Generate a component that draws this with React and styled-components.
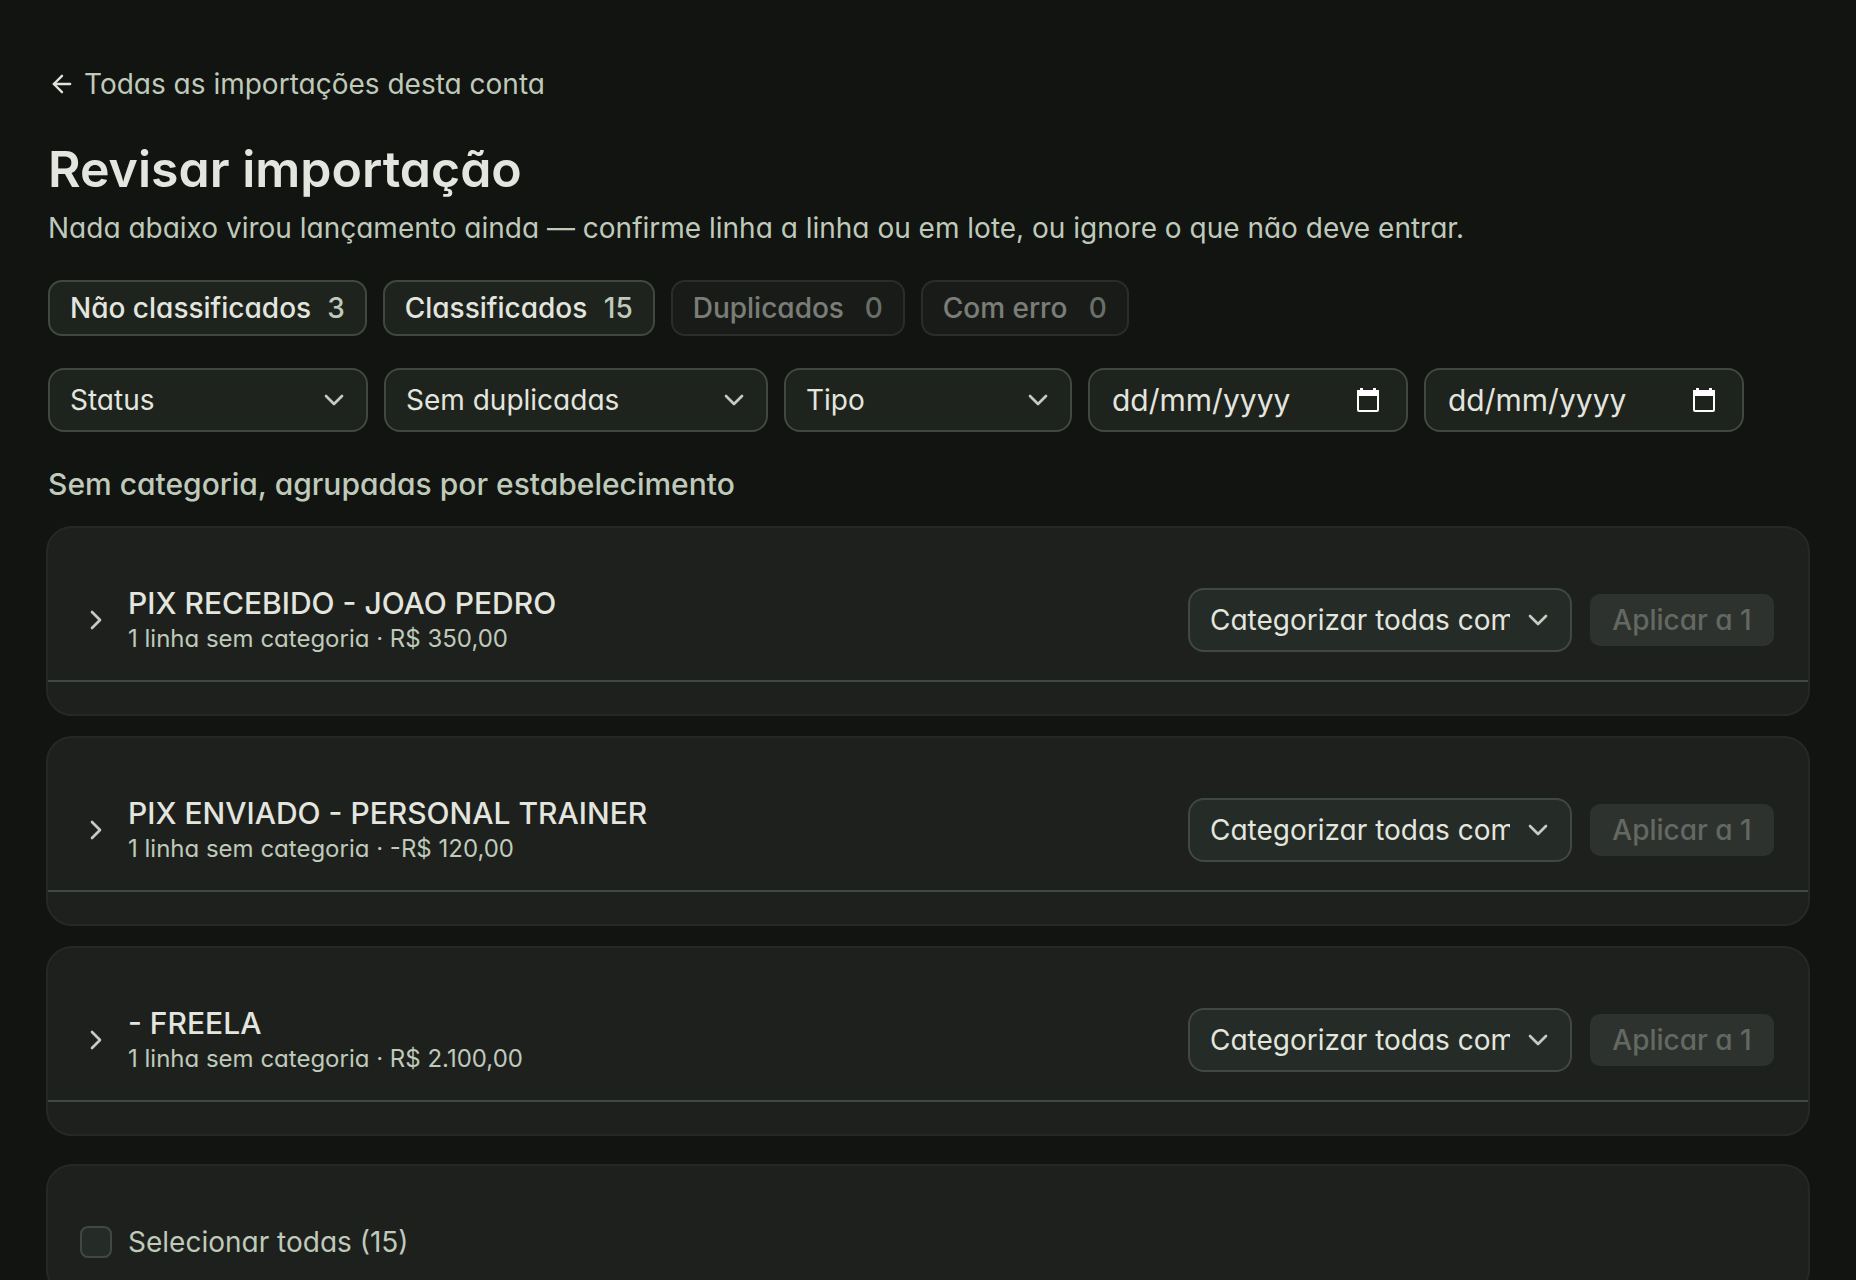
import styled, { createGlobalStyle } from "styled-components";
import { ArrowLeft, ChevronDown, ChevronRight } from "lucide-react";

const chips = [
    { label: "Não classificados", count: 3, width: 318 },
    { label: "Classificados", count: 15, width: 272 },
    { label: "Duplicados", count: 0, width: 234 },
    { label: "Com erro", count: 0, width: 208 },
];

const groups = [
    { name: "PIX RECEBIDO - JOAO PEDRO", info: "1 linha sem categoria · R$ 350,00" },
    { name: "PIX ENVIADO - PERSONAL TRAINER", info: "1 linha sem categoria · -R$ 120,00" },
    { name: "- FREELA", info: "1 linha sem categoria · R$ 2.100,00" },
];

const CalendarIcon = () => (
    <svg width="24" height="26" viewBox="0 0 24 26" fill="none" aria-hidden="true">
        <rect x="2" y="4" width="20" height="20" rx="1" stroke="#ffffff" strokeWidth="2" />
        <path d="M1 3h22v6H1zM4 1h3v3H4zM17 1h3v3h-3z" fill="#ffffff" />
    </svg>
);

const SelectField = ({ label, width, raised }) => (
    <Field $width={width}>
        <Select aria-label={label} $raised={raised} defaultValue="">
            <option value="">{label}</option>
        </Select>
        <FieldIcon>
            <ChevronDown size={32} />
        </FieldIcon>
    </Field>
);

const DateField = ({ label }) => (
    <Field $width={320}>
        <DateInput type="text" inputMode="numeric" placeholder="dd/mm/yyyy" aria-label={label} />
        <DateIcon>
            <CalendarIcon />
        </DateIcon>
    </Field>
);

const GroupCard = ({ name, info }) => (
    <Card>
        <GroupHeader>
            <Toggle type="button" aria-label={`Expandir ${name}`}>
                <ChevronRight size={32} />
            </Toggle>
            <GroupText>
                <GroupName>{name}</GroupName>
                <GroupInfo>{info}</GroupInfo>
            </GroupText>
            <GroupActions>
                <SelectField label="Categorizar todas como…" width={384} raised />
                <ApplyButton type="button" disabled>Aplicar a 1</ApplyButton>
            </GroupActions>
        </GroupHeader>
    </Card>
);

const App = () => {
    return (
        <>
            <GlobalStyle />
            <Page>
                <BackLink href="#importacoes">
                    <ArrowLeft size={28} color="#dfe4dc" />
                    Todas as importações desta conta
                </BackLink>
                <Title>Revisar importação</Title>
                <Subtitle>
                    Nada abaixo virou lançamento ainda — confirme linha a linha ou em lote, ou ignore o que não deve entrar.
                </Subtitle>
                <Chips>
                    {chips.map((chip) => (
                        <Chip key={chip.label} type="button" $width={chip.width} disabled={chip.count === 0}>
                            {chip.label}
                            <Count>{chip.count}</Count>
                        </Chip>
                    ))}
                </Chips>
                <Filters>
                    <SelectField label="Status" width={320} />
                    <SelectField label="Sem duplicadas" width={384} />
                    <SelectField label="Tipo" width={288} />
                    <DateField label="Data inicial" />
                    <DateField label="Data final" />
                </Filters>
                <SectionTitle>Sem categoria, agrupadas por estabelecimento</SectionTitle>
                <Groups>
                    {groups.map((group) => (
                        <GroupCard key={group.name} name={group.name} info={group.info} />
                    ))}
                </Groups>
                <Card>
                    <SelectAll>
                        <Checkbox type="checkbox" />
                        Selecionar todas (15)
                    </SelectAll>
                </Card>
            </Page>
        </>
    );
};
export default App;

const GlobalStyle = createGlobalStyle`
  * {
    box-sizing: border-box;
  }
  html {
    background-color: #121411;
    color-scheme: dark;
    scrollbar-width: none;
  }
  body {
    margin: 0;
    color: #e3e5df;
    font-family: Inter, sans-serif;
    font-size: 28px;
    line-height: 40px;
    font-feature-settings: "cv11";
  }
  button, input, select {
    font: inherit;
    font-feature-settings: inherit;
    color: inherit;
    margin: 0;
  }
`;
const Page = styled.main`
  display: flex;
  flex-direction: column;
  padding: 64px 46px 32px;
`;
const BackLink = styled.a`
  display: flex;
  align-items: center;
  align-self: flex-start;
  gap: 8px;
  padding: 0 2px;
  color: #bfcaba;
  text-decoration: none;
`;
const Title = styled.h1`
  margin: 36px 2px 10px;
  font-size: 50px;
  font-weight: 600;
  line-height: 58px;
`;
const Subtitle = styled.p`
  margin: 0 2px;
  color: #bfcaba;
`;
const Chips = styled.div`
  display: flex;
  flex-wrap: wrap;
  gap: 16px;
  margin: 32px 2px;
`;
const Chip = styled.button`
  min-width: ${(props) => props.$width}px;
  height: 56px;
  display: flex;
  align-items: center;
  justify-content: space-between;
  gap: 16px;
  padding: 0 20px;
  border: 2px solid #404842;
  border-radius: 14px;
  background-color: #1e231e;
  font-weight: 500;
  line-height: 36px;
  &:disabled {
    opacity: 0.5;
  }
`;
const Count = styled.span`
  color: #bfcaba;
`;
const Filters = styled.div`
  display: flex;
  flex-wrap: wrap;
  gap: 16px;
  margin: 0 2px;
`;
const Field = styled.div`
  display: grid;
  align-items: center;
  flex: none;
  width: ${(props) => props.$width}px;
  height: 64px;
`;
const Select = styled.select`
  grid-area: 1 / 1;
  width: 100%;
  height: 64px;
  appearance: none;
  padding: 0 60px 0 20px;
  border: 2px solid #404842;
  border-radius: 16px;
  background-color: ${(props) => (props.$raised ? "#252b26" : "#1e231e")};
  text-overflow: clip;
`;
const FieldIcon = styled.span`
  grid-area: 1 / 1;
  justify-self: end;
  display: flex;
  margin-right: 18px;
  color: #c4cbc1;
  pointer-events: none;
`;
const DateInput = styled.input`
  grid-area: 1 / 1;
  width: 100%;
  height: 64px;
  padding: 0 64px 0 22px;
  border: 2px solid #404842;
  border-radius: 16px;
  background-color: #1e231e;
  font-size: 30px;
  &::placeholder {
    color: #e3e5df;
    opacity: 1;
  }
`;
const DateIcon = styled(FieldIcon)`
  margin-right: 28px;
`;
const SectionTitle = styled.h2`
  margin: 32px 2px 22px;
  color: #bfcaba;
  font-size: 30px;
  font-weight: 500;
  line-height: 40px;
`;
const Groups = styled.div`
  display: flex;
  flex-direction: column;
  gap: 20px;
  margin-bottom: 28px;
`;
const Card = styled.section`
  padding-bottom: 32px;
  border: 2px solid #252824;
  border-radius: 26px;
  background-color: #1e201d;
`;
const GroupHeader = styled.div`
  display: flex;
  align-items: center;
  gap: 16px;
  padding: 56px 34px 24px 32px;
  border-bottom: 2px solid #404842;
`;
const Toggle = styled.button`
  display: flex;
  flex: none;
  padding: 0;
  border: 0;
  background: none;
  color: #c4cbc1;
`;
const GroupText = styled.div`
  flex: 1;
  min-width: 0;
`;
const GroupName = styled.div`
  font-size: 30px;
  font-weight: 500;
  line-height: 38px;
`;
const GroupInfo = styled.div`
  color: #bfcaba;
  font-size: 24px;
  line-height: 34px;
`;
const GroupActions = styled.div`
  display: flex;
  align-items: center;
  gap: 18px;
`;
const ApplyButton = styled.button`
  flex: none;
  width: 184px;
  height: 52px;
  padding: 0;
  border: 0;
  border-radius: 10px;
  background-color: #2e322e;
  font-weight: 500;
  line-height: 36px;
  &:disabled {
    color: #646863;
  }
`;
const SelectAll = styled.label`
  display: flex;
  align-items: center;
  gap: 16px;
  padding: 56px 32px 0;
  color: #bfcaba;
`;
const Checkbox = styled.input`
  width: 32px;
  height: 32px;
  flex: none;
  appearance: none;
  border: 2px solid #404842;
  border-radius: 8px;
  background-color: #252b26;
`;
